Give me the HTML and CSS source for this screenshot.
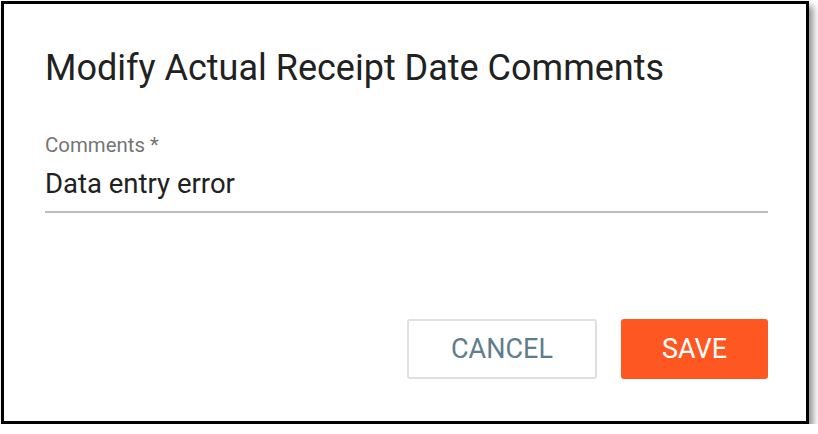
FILE: index.html
```html
<!DOCTYPE html>
<html>
<head>
<meta charset="utf-8">
<link rel="stylesheet" href="styles.css">
</head>
<body>
<div class="dialog">
  <h1 class="title">Modify Actual Receipt Date Comments</h1>
  <div class="field">
    <label class="label">Comments *</label>
    <div class="value">Data entry error</div>
  </div>
  <div class="actions">
    <button class="btn btn-cancel">CANCEL</button>
    <button class="btn btn-save">SAVE</button>
  </div>
</div>
</body>
</html>
```

FILE: styles.css
```css
html, body {
  margin: 0;
  padding: 0;
  background: #fff;
}
body {
  padding: 1px 0 0 1px;
  font-family: Roboto, "Liberation Sans", sans-serif;
}
.dialog {
  box-sizing: border-box;
  width: 808px;
  height: 423px;
  border: 3px solid #000;
  background: #fff;
  box-shadow: 4px 5px 7px rgba(0,0,0,0.45);
  padding: 0 38px 0 41px;
  display: flex;
  flex-direction: column;
}
.title {
  margin: 42px 0 0 0;
  font-size: 36px;
  font-weight: 400;
  line-height: 44px;
  color: #212121;
}
.field {
  margin-top: 43px;
  border-bottom: 2px solid #bdbdbd;
  padding-bottom: 10px;
}
.label {
  display: block;
  font-size: 20.4px;
  line-height: 24px;
  color: #757575;
}
.value {
  font-size: 27.5px;
  line-height: 34px;
  color: #212121;
  margin-top: 10px;
}
.actions {
  margin-top: auto;
  margin-bottom: 42px;
  display: flex;
  justify-content: flex-end;
  gap: 24px;
}
.btn {
  box-sizing: border-box;
  height: 60px;
  font-family: Roboto, "Liberation Sans", sans-serif;
  font-size: 27px;
  border-radius: 3px;
  cursor: pointer;
}
.btn-cancel {
  width: 190px;
  background: #fff;
  border: 2px solid #e0e0e0;
  color: #607d8b;
}
.btn-save {
  width: 147px;
  background: #ff5722;
  border: none;
  color: #fff;
}
```
